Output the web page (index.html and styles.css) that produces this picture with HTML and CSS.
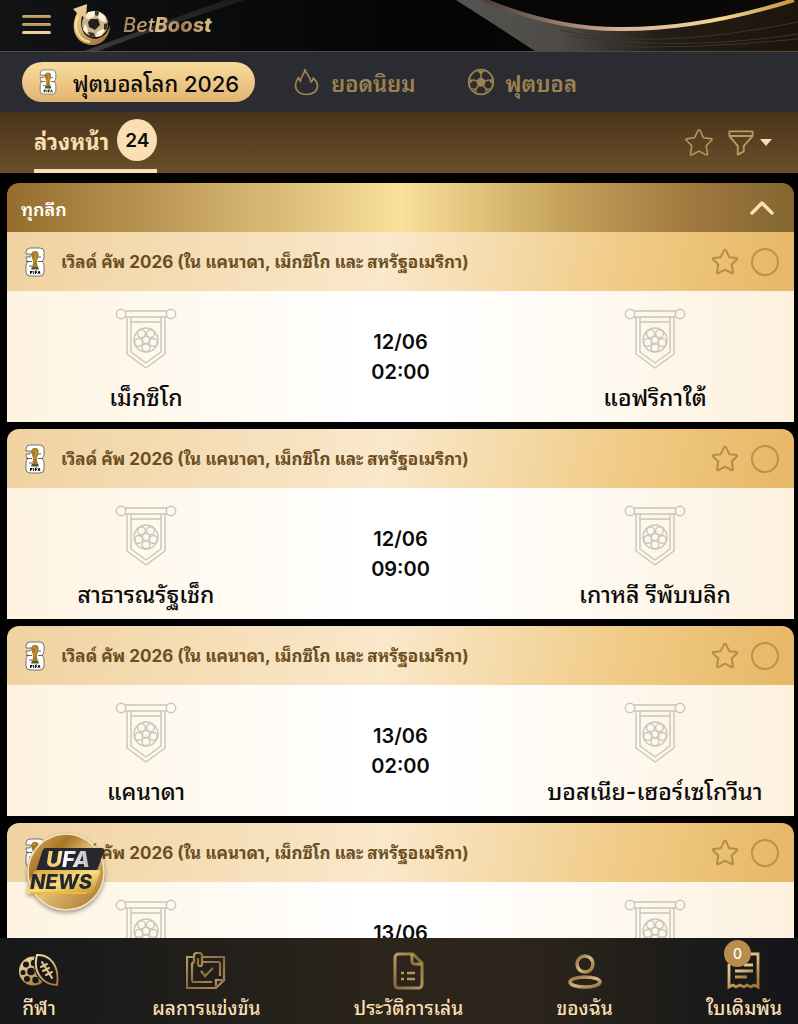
FILE: index.html
```html
<!DOCTYPE html>
<html lang="th">
<head>
    <meta charset="UTF-8">
    <meta name="viewport" content="width=device-width, initial-scale=1.0">
    <title>BetBoost</title>
    <link rel="stylesheet" href="styles.css">
</head>
<body>
    <!-- Icon sprite -->
    <svg class="sprite" aria-hidden="true">
        <defs>
            <linearGradient id="gold" x1="0" y1="0" x2="1" y2="1">
                <stop offset="0" stop-color="#8a6a3a"/>
                <stop offset="0.5" stop-color="#d6b982"/>
                <stop offset="1" stop-color="#8f6c34"/>
            </linearGradient>
            <linearGradient id="gold-light" x1="0" y1="0" x2="0.6" y2="1">
                <stop offset="0" stop-color="#f0d8a6"/>
                <stop offset="0.5" stop-color="#dcb97a"/>
                <stop offset="1" stop-color="#a67a3a"/>
            </linearGradient>
            <linearGradient id="gold-dim" x1="0" y1="0" x2="1" y2="1">
                <stop offset="0" stop-color="#b99b63"/>
                <stop offset="0.5" stop-color="#86693c"/>
                <stop offset="1" stop-color="#b3925a"/>
            </linearGradient>
        </defs>
        <symbol id="icon-cup" viewBox="0 0 20 30">
            <path d="M5 1h10q4 0 4 4v5q0 3-2 4.500 2 1.500 2 4.500v6q0 4-4 4H5q-4 0-4-4v-6q0-3 2-4.500Q1 13 1 10h4l2-3H1V5q0-4 4-4z" fill="#fff" stroke="#555" stroke-width="0.800"/>
            <path d="M1 14.500h6M13 14.500h5M13 10h3M4 19h3" stroke="#555" stroke-width="0.900"/>
            <path d="M10 4c3 0 4 2 3.500 5-.4 3-1.800 4-1.600 7l1.600 6h-7l1.600-6c.2-3-1.200-4-1.600-7C6 6 7 4 10 4z" fill="#a67a28"/>
            <path d="M8 6q4 0 3 4l-2 5" fill="none" stroke="#d0a548" stroke-width="1"/>
            <path d="M6.800 20h6.400l.6 2.500H6.200z" fill="#4a5a2c"/>
            <path d="M5.500 24v3M5.500 24.500h2M5.500 25.700h1.700M8.700 24v3M10.500 27v-3h1.700M10.500 25.500h1.500M13 27l1-3 1 3" stroke="#111" stroke-width="1" fill="none"/>
        </symbol>
        <symbol id="icon-star" viewBox="0 0 30 30">
            <path d="M15 2q.8 0 1.200.8l3.300 7 7.700 1q1.400.3.500 1.500l-5.500 5.400 1.300 8.200q.1 1.500-1.400 1L15 23.100l-7.100 3.800q-1.500.5-1.400-1l1.300-8.200-5.500-5.400q-.9-1.200.5-1.500l7.700-1 3.300-7q.4-.8 1.200-.8z" fill="none" stroke="currentColor" stroke-linejoin="round"/>
        </symbol>
        <symbol id="icon-pennant" viewBox="0 0 62 62">
            <g fill="none" stroke="currentColor" stroke-width="1.400">
                <circle cx="6" cy="6" r="4.700"/>
                <circle cx="56" cy="6" r="4.700"/>
                <path d="M10 3h42M10 9h42M12 9v37l19 14 19-14V9M16 9v35l15 11 15-11V9M16 14h30"/>
                <circle cx="31" cy="32" r="12"/>
                <circle cx="31" cy="32" r="3.600"/>
                <circle cx="26.500" cy="25.800" r="3.900"/>
                <circle cx="35.500" cy="25.800" r="3.900"/>
                <circle cx="23.700" cy="34.400" r="3.900"/>
                <circle cx="38.300" cy="34.400" r="3.900"/>
                <circle cx="31" cy="39.700" r="3.900"/>
            </g>
        </symbol>
        <symbol id="icon-ball" viewBox="0 0 28 28">
            <circle cx="14" cy="14" r="12.300" fill="none" stroke="currentColor" stroke-width="1.800"/>
            <path d="M14 9l5 3.700-1.900 5.800h-6.200L9 12.700zM9.500 2.800h9L14 6.200zM25.500 10.500v6l-3.700-3.900zM2.500 10.500v6l3.700-3.900zM18 24.500l5.500-4.500-4.500.8zM10 24.500L4.500 20l4.500.8z" fill="currentColor"/>
            <path d="M14 9V5M19 12.700l3.500-1M9 12.700l-3.500-1M17.100 18.500l2.200 3M10.900 18.500l-2.200 3" stroke="currentColor" stroke-width="1.500"/>
        </symbol>
    </svg>

    <div class="app">
        <header class="header">
            <svg class="header-waves" viewBox="0 0 798 51" preserveAspectRatio="xMaxYMid slice" aria-hidden="true">
                <defs>
                    <linearGradient id="wave" x1="0" y1="0" x2="1" y2="0">
                        <stop offset="0" stop-color="#4c3d38"/>
                        <stop offset="0.45" stop-color="#d8b49b"/>
                        <stop offset="0.75" stop-color="#f3d693"/>
                        <stop offset="1" stop-color="#c8963c"/>
                    </linearGradient>
                    <linearGradient id="band" x1="0" y1="0" x2="1" y2="0">
                        <stop offset="0" stop-color="#555452"/>
                        <stop offset="0.3" stop-color="#4e4b47"/>
                        <stop offset="0.6" stop-color="#231d17"/>
                        <stop offset="1" stop-color="#1d150c"/>
                    </linearGradient>
                    <linearGradient id="streak" x1="1" y1="0" x2="0" y2="1">
                        <stop offset="0" stop-color="#1a1b1c"/>
                        <stop offset="0.5" stop-color="#2a2b2c"/>
                        <stop offset="1" stop-color="#3c3d3e"/>
                    </linearGradient>
                </defs>
                <path d="M225 0L84 51h14Q170 24 245 0z" fill="url(#streak)"/>
                <path d="M456 0h28q70 29 134 29 80 2 180-29v51H535Q500 28 456 0z" fill="url(#band)"/>
                <path d="M560 30q90 22 238-8M570 36q110 16 228-2M600 46q90 4 198-7" fill="none" stroke="#3c352c" stroke-width="1"/>
                <path d="M484 0q70 29 134 29 80 1 176-29" fill="none" stroke="url(#wave)" stroke-width="4"/>
            </svg>
            <button class="menu-btn" aria-label="เมนู">
                <span></span><span></span><span></span>
            </button>
            <a class="logo" href="#">
                <svg class="logo-mark" viewBox="0 0 38 42" aria-hidden="true">
                    <circle cx="22" cy="20" r="13" fill="#c9b48e"/>
                    <path d="M18 15l7 0 2 6-5 5-6-3-1-5z" fill="#241f1a"/>
                    <path d="M15 8l7-1-1 6-6 2-3-2zM26 8l6 4 1 6-5-1-3-4zM12 20l3 6-1 4-4-4zM24 28l6-3 2 1-4 6-5 1z" fill="#fff2d8"/>
                    <path d="M31 20l4-1-1 6-3 1zM15 28l6 1 1 4-5-1zM22 7l4 1-1 4-3-1z" fill="#3a3027"/>
                    <path d="M14 0L0 5l4 4C-2 20-1 38 17 41c12 1 20-8 20-20-2 9-10 16-19 13C8 31 7 20 9 12l4 3z" fill="url(#gold-light)"/>
                    <path d="M5 12C0 24 5 36 17 38" fill="none" stroke="#f8df9a" stroke-width="2"/>
                </svg>
                <span class="logo-text"><span class="logo-thin">Bet</span>Boost</span>
            </a>
        </header>

        <nav class="sports">
            <button class="sport active">
                <svg class="cup-icon" aria-hidden="true"><use href="#icon-cup"/></svg>
                ฟุตบอลโลก 2026
            </button>
            <button class="sport">
                <svg class="sport-icon" viewBox="0 0 28 28" aria-hidden="true">
                    <path d="M12 1.500c1 5 5.500 6.500 6 12.500 1.500-.8 2-2 2-4 3 2.500 4.500 5 4.500 8C24.500 23.500 19.500 26.500 13.500 26.500S2.500 23 2.500 17.500c0-4 1.500-6 3-8 .5 2 .8 3 2 4C7.500 8.500 11.500 6 12 1.500z" fill="none" stroke="currentColor" stroke-width="1.700" stroke-linejoin="round"/>
                </svg>
                ยอดนิยม
            </button>
            <button class="sport">
                <svg class="sport-icon" aria-hidden="true"><use href="#icon-ball"/></svg>
                ฟุตบอล
            </button>
        </nav>

        <div class="subbar">
            <button class="period">ล่วงหน้า <span class="count">24</span></button>
            <div class="subbar-actions">
                <button class="icon-btn" aria-label="รายการโปรด">
                    <svg class="star-lg" aria-hidden="true"><use href="#icon-star"/></svg>
                </button>
                <button class="icon-btn filter-btn" aria-label="ตัวกรอง">
                    <svg class="filter-icon" viewBox="0 0 28 28" aria-hidden="true">
                        <path d="M1.500 1.500h25v5L17 17v6l-6.500 3.500V17L1.500 6.500zM1.500 6.500h25" fill="none" stroke="currentColor" stroke-width="2" stroke-linejoin="round"/>
                    </svg>
                    <svg class="caret-icon" viewBox="0 0 12 7" aria-hidden="true"><path d="M0 0h12L6 7z" fill="#f9dfb1"/></svg>
                </button>
            </div>
        </div>

        <main class="matches">
            <button class="all-leagues">
                ทุกลีก
                <svg class="chevron" viewBox="0 0 24 16" aria-hidden="true"><path d="M2 13L12 3l10 10" fill="none" stroke="#f9e2ae" stroke-width="3.500" stroke-linecap="round" stroke-linejoin="round"/></svg>
            </button>

            <section class="card first">
                <div class="league">
                    <svg class="cup-icon" aria-hidden="true"><use href="#icon-cup"/></svg>
                    <h2>เวิลด์ คัพ 2026 (ใน แคนาดา, เม็กซิโก และ สหรัฐอเมริกา)</h2>
                    <button class="icon-btn" aria-label="รายการโปรด"><svg class="star" aria-hidden="true"><use href="#icon-star"/></svg></button>
                    <input type="checkbox" class="pick" aria-label="เลือกลีก">
                </div>
                <div class="match">
                    <div class="team"><svg class="pennant" aria-hidden="true"><use href="#icon-pennant"/></svg><span>เม็กซิโก</span></div>
                    <div class="time"><span>12/06</span><span>02:00</span></div>
                    <div class="team"><svg class="pennant" aria-hidden="true"><use href="#icon-pennant"/></svg><span>แอฟริกาใต้</span></div>
                </div>
            </section>

            <section class="card">
                <div class="league">
                    <svg class="cup-icon" aria-hidden="true"><use href="#icon-cup"/></svg>
                    <h2>เวิลด์ คัพ 2026 (ใน แคนาดา, เม็กซิโก และ สหรัฐอเมริกา)</h2>
                    <button class="icon-btn" aria-label="รายการโปรด"><svg class="star" aria-hidden="true"><use href="#icon-star"/></svg></button>
                    <input type="checkbox" class="pick" aria-label="เลือกลีก">
                </div>
                <div class="match">
                    <div class="team"><svg class="pennant" aria-hidden="true"><use href="#icon-pennant"/></svg><span>สาธารณรัฐเช็ก</span></div>
                    <div class="time"><span>12/06</span><span>09:00</span></div>
                    <div class="team"><svg class="pennant" aria-hidden="true"><use href="#icon-pennant"/></svg><span>เกาหลี รีพับบลิก</span></div>
                </div>
            </section>

            <section class="card">
                <div class="league">
                    <svg class="cup-icon" aria-hidden="true"><use href="#icon-cup"/></svg>
                    <h2>เวิลด์ คัพ 2026 (ใน แคนาดา, เม็กซิโก และ สหรัฐอเมริกา)</h2>
                    <button class="icon-btn" aria-label="รายการโปรด"><svg class="star" aria-hidden="true"><use href="#icon-star"/></svg></button>
                    <input type="checkbox" class="pick" aria-label="เลือกลีก">
                </div>
                <div class="match">
                    <div class="team"><svg class="pennant" aria-hidden="true"><use href="#icon-pennant"/></svg><span>แคนาดา</span></div>
                    <div class="time"><span>13/06</span><span>02:00</span></div>
                    <div class="team"><svg class="pennant" aria-hidden="true"><use href="#icon-pennant"/></svg><span>บอสเนีย-เฮอร์เซโกวีนา</span></div>
                </div>
            </section>

            <section class="card">
                <div class="league">
                    <svg class="cup-icon" aria-hidden="true"><use href="#icon-cup"/></svg>
                    <h2>เวิลด์ คัพ 2026 (ใน แคนาดา, เม็กซิโก และ สหรัฐอเมริกา)</h2>
                    <button class="icon-btn" aria-label="รายการโปรด"><svg class="star" aria-hidden="true"><use href="#icon-star"/></svg></button>
                    <input type="checkbox" class="pick" aria-label="เลือกลีก">
                </div>
                <div class="match">
                    <div class="team"><svg class="pennant" aria-hidden="true"><use href="#icon-pennant"/></svg></div>
                    <div class="time"><span>13/06</span></div>
                    <div class="team"><svg class="pennant" aria-hidden="true"><use href="#icon-pennant"/></svg></div>
                </div>
            </section>
        </main>

        <!-- Floating news button -->
        <a class="news" href="#" aria-label="UFA NEWS">
            <svg viewBox="0 0 80 80" aria-hidden="true">
                <defs>
                    <linearGradient id="coin" x1="0" y1="0" x2="1" y2="1">
                        <stop offset="0" stop-color="#d9ad60"/>
                        <stop offset="0.3" stop-color="#a87628"/>
                        <stop offset="0.5" stop-color="#e3bd74"/>
                        <stop offset="1" stop-color="#a26f22"/>
                    </linearGradient>
                    <linearGradient id="plate" x1="0" y1="0" x2="1" y2="1">
                        <stop offset="0" stop-color="#d2a13c"/>
                        <stop offset="0.5" stop-color="#f7dc80"/>
                        <stop offset="1" stop-color="#c08d28"/>
                    </linearGradient>
                    <linearGradient id="ufa" x1="0" y1="0" x2="1" y2="0">
                        <stop offset="0.25" stop-color="#f2cf70"/>
                        <stop offset="0.4" stop-color="#ffffff"/>
                        <stop offset="1" stop-color="#b9bcc0"/>
                    </linearGradient>
                </defs>
                <circle cx="40" cy="40" r="38" fill="url(#coin)" stroke="#f3e3bf" stroke-width="1.500"/>
                <path d="M20 16h55q4 0 3 3l-6 17q-1 3-5 3H10l6-19q1-4 4-4z" fill="#26282c"/>
                <path d="M12 38h59q4 0 3 3l-5 14q-2 6-7 7H4q-4 0-3-4l6-16q1-4 5-4z" fill="url(#plate)"/>
                <path d="M4 61h56" stroke="#f1b92e" stroke-width="2"/>
                <text class="news-top" x="20" y="35" fill="url(#ufa)">UFA</text>
                <text class="news-bottom" x="4" y="57" fill="#26282c">NEWS</text>
            </svg>
        </a>

        <nav class="bottom-nav">
            <a href="#" class="nav-item">
                <svg class="nav-icon" viewBox="0 0 40 38" aria-hidden="true">
                    <circle cx="14.500" cy="19" r="14.500" fill="url(#gold-light)"/>
                    <g fill="#17181a">
                        <circle cx="12" cy="19.500" r="3.800"/>
                        <circle cx="7" cy="12.500" r="3"/>
                        <circle cx="15" cy="11" r="3.200"/>
                        <circle cx="4" cy="20.500" r="2.500"/>
                        <circle cx="8" cy="27" r="3"/>
                        <circle cx="16.500" cy="28" r="3.200"/>
                        <circle cx="20" cy="21" r="3"/>
                    </g>
                    <path d="M18 3C30 2 41 13 38 33 25 33 13 21 18 3z" fill="#17181a" stroke="#17181a" stroke-width="4"/>
                    <path d="M18 3C30 2 41 13 38 33 25 33 13 21 18 3z" fill="none" stroke="url(#gold-light)" stroke-width="2"/>
                    <path d="M23 10l10 16M22 15l6-3M24 19l6-3M27 23l6-3" fill="none" stroke="#e3c38a" stroke-width="2" stroke-linecap="round"/>
                </svg>
                กีฬา
            </a>
            <a href="#" class="nav-item">
                <svg class="nav-icon" viewBox="0 0 40 38" aria-hidden="true">
                    <g fill="none" stroke="url(#gold-dim)" stroke-width="2.200">
                        <path d="M7 5H1v31h29l8-8V5H17"/>
                        <path d="M30 36v-8h8"/>
                        <path d="M6 11v17q0 2 2 2h18M17 10h15q2 0 2 2v12M9 10q-3 0-3 3"/>
                        <path d="M8 11V4q0-3 3-3h2q3 0 3 3v8q0 2-2 2t-2-2V6"/>
                        <path d="M15 19l4 5 8-8"/>
                    </g>
                </svg>
                ผลการแข่งขัน
            </a>
            <a href="#" class="nav-item">
                <svg class="nav-icon" viewBox="0 0 40 38" aria-hidden="true">
                    <g fill="none" stroke="url(#gold-dim)" stroke-width="3" stroke-linejoin="round">
                        <path d="M10 2h14l9 9v21q0 4-4 4H10q-4 0-4-4V6q0-4 4-4z"/>
                        <path d="M23 2v7q0 3 3 3h7"/>
                    </g>
                    <path d="M12 21h3M12 27h3M18 21h8M18 27h8" stroke="#b3925a" stroke-width="2.500"/>
                </svg>
                ประวัติการเล่น
            </a>
            <a href="#" class="nav-item">
                <svg class="nav-icon" viewBox="0 0 40 38" aria-hidden="true">
                    <g fill="none" stroke="url(#gold)" stroke-width="3.500">
                        <circle cx="20" cy="12" r="8"/>
                        <ellipse cx="20" cy="30" rx="15" ry="5"/>
                    </g>
                </svg>
                ของฉัน
            </a>
            <a href="#" class="nav-item">
                <svg class="nav-icon" viewBox="0 0 40 38" aria-hidden="true">
                    <g fill="none" stroke="url(#gold-light)" stroke-width="2.800">
                        <path d="M27 2h7v33l-4-2-3 2-4-2-3 2-4-2-4 2-3-2-4 2V12"/>
                        <path d="M11 19h18M11 25h12M20 13h9"/>
                    </g>
                </svg>
                ใบเดิมพัน
                <span class="slip-count">0</span>
            </a>
        </nav>
    </div>
</body>
</html>
```
FILE: styles.css
```css
:root {
    --cream: #f9dfb1;
    --gold: #9d8350;
    --brown: #6b4e22;
    --dark: #2b2c32;
}

* {
    margin: 0;
    padding: 0;
    box-sizing: border-box;
    font-family: Inter, Thonburi, 'Noto Sans Thai Looped', Loma, Garuda, 'Noto Sans Thai', sans-serif;
}

body {
    background: #000;
    color: #0b0b0b;
}

button {
    background: none;
    border: none;
    cursor: pointer;
    color: inherit;
}

a {
    color: inherit;
    text-decoration: none;
}

svg {
    display: block;
    flex-shrink: 0;
}

.sprite {
    position: absolute;
    width: 0;
    height: 0;
}

.app {
    position: relative;
    height: 100vh;
    display: flex;
    flex-direction: column;
}

/* Header */
.header {
    position: relative;
    display: flex;
    align-items: center;
    gap: 22px;
    height: 52px;
    padding: 0 22px 2px;
    background: linear-gradient(90deg, #111314, #050505 50%, #0b0907);
    border-bottom: 1px solid #4b4c48;
    flex-shrink: 0;
}

.header-waves {
    position: absolute;
    top: 0;
    left: 0;
    width: 100%;
    height: 100%;
}

.menu-btn {
    position: relative;
    display: flex;
    flex-direction: column;
    gap: 5px;
    width: 29px;
}

.menu-btn span {
    height: 3px;
    border-radius: 2px;
    background: linear-gradient(180deg, #d0b078, #a98852);
}

.menu-btn span:last-child {
    background: #ecd19c;
}

.logo {
    position: relative;
    display: flex;
    align-items: center;
    gap: 12px;
}

.logo-mark {
    width: 38px;
    height: 42px;
}

.logo-text {
    font-size: 20px;
    font-style: italic;
    font-weight: 800;
    background: linear-gradient(90deg, #a5835a, #dcbd8b 40%, #a07c4c 65%, #e0c08c);
    background-clip: text;
    -webkit-background-clip: text;
    color: transparent;
}

.logo-thin {
    font-weight: 500;
}

/* Sports */
.sports {
    display: flex;
    align-items: center;
    gap: 38px;
    height: 60px;
    padding: 0 22px;
    background: var(--dark);
    flex-shrink: 0;
}

.sport {
    display: flex;
    align-items: center;
    gap: 10px;
    height: 40px;
    padding-right: 14px;
    font-size: 22px;
    font-weight: 600;
    color: var(--gold);
    white-space: nowrap;
}

.sport.active {
    padding: 0 16px 0 17px;
    gap: 16px;
    border-radius: 20px;
    color: #0b0b0b;
    font-weight: 500;
    background: linear-gradient(180deg, #f9dd9d, #e2b372);
}

.sport-icon {
    width: 28px;
    height: 28px;
}

.cup-icon {
    width: 20px;
    height: 30px;
}

.sport .cup-icon {
    width: 18px;
    height: 26px;
}

/* Sub bar */
.subbar {
    display: flex;
    align-items: center;
    justify-content: space-between;
    height: 61px;
    padding: 0 26px 0 34px;
    background: linear-gradient(180deg, #4a341a, #6b4f2a);
    flex-shrink: 0;
}

.period {
    display: flex;
    align-items: center;
    gap: 8px;
    height: 61px;
    padding-bottom: 1px;
    border-bottom: 4px solid var(--cream);
    color: var(--cream);
    font-size: 22px;
    font-weight: 700;
}

.count {
    display: flex;
    align-items: center;
    justify-content: center;
    width: 40px;
    height: 42px;
    border-radius: 50%;
    background: var(--cream);
    color: #0b0b0b;
    font-size: 19px;
    font-weight: 600;
}

.subbar-actions {
    display: flex;
    align-items: center;
    gap: 14px;
    color: #b99b61;
}

.star-lg {
    width: 30px;
    height: 30px;
    stroke-width: 1.5px;
}

.filter-btn {
    display: flex;
    align-items: center;
    gap: 6px;
}

.filter-icon {
    width: 26px;
    height: 26px;
}

.caret-icon {
    width: 12px;
    height: 7px;
}

/* Matches */
.matches {
    flex: 1;
    min-height: 0;
    overflow: hidden;
    padding: 10px 4px 0 7px;
}

.all-leagues {
    display: flex;
    align-items: center;
    justify-content: space-between;
    width: 100%;
    height: 49px;
    padding: 0 20px 0 14px;
    border-radius: 12px 12px 0 0;
    background: linear-gradient(90deg, #956c2b, #fae099 50%, #c6a45c 70%, #a07840 87%, #83662f);
    color: #fff;
    font-size: 18px;
    font-weight: 600;
}

.chevron {
    width: 24px;
    height: 16px;
}

.card {
    margin-bottom: 7px;
    border-radius: 12px 12px 0 0;
    overflow: hidden;
}

.card.first {
    border-radius: 0;
}

.league {
    display: flex;
    align-items: center;
    height: 59px;
    padding: 0 15px 0 18px;
    background: linear-gradient(100deg, #f0d2a0, #fae8cb 48%, #f0c982 80%, #e6b766);
}

.league h2 {
    flex: 1;
    margin-left: 16px;
    padding-bottom: 2px;
    font-size: 17px;
    font-weight: 700;
    color: var(--brown);
    white-space: nowrap;
}

.league .icon-btn {
    color: #b58c48;
}

.star {
    width: 28px;
    height: 28px;
    stroke-width: 2.2px;
}

.pick {
    appearance: none;
    width: 28px;
    height: 28px;
    margin-left: 12px;
    border: 2px solid #bd9149;
    border-radius: 50%;
}

.match {
    display: flex;
    justify-content: space-between;
    height: 131px;
    background: linear-gradient(90deg, #fef3e0, #fff 45%, #fff 55%, #fdf1de);
}

.team {
    display: flex;
    flex-direction: column;
    align-items: center;
    gap: 10px;
    width: 278px;
    padding-top: 17px;
    font-size: 23px;
    line-height: 36px;
    font-weight: 500;
    white-space: nowrap;
}

.pennant {
    width: 62px;
    height: 62px;
    color: #c9c5bb;
}

.time {
    display: flex;
    flex-direction: column;
    padding-top: 36px;
    font-size: 20px;
    line-height: 30px;
    font-weight: 600;
    text-align: center;
}

/* News button */
.news {
    position: absolute;
    left: 26px;
    bottom: 112px;
    width: 80px;
    height: 80px;
    filter: drop-shadow(0 2px 2px rgba(0, 0, 0, 0.4));
}

.news-top {
    font-size: 22px;
    font-weight: 800;
    font-style: italic;
}

.news-bottom {
    font-size: 20px;
    font-weight: 800;
    font-style: italic;
}

/* Bottom nav */
.bottom-nav {
    display: flex;
    justify-content: space-between;
    height: 86px;
    padding: 14px 16px 0 19px;
    background: linear-gradient(90deg, #17181a, #2c251b 50%, #2c251b 65%, #131519);
    color: var(--cream);
    flex-shrink: 0;
}

.nav-item {
    position: relative;
    display: flex;
    flex-direction: column;
    align-items: center;
    gap: 5px;
    font-size: 19px;
    line-height: 28px;
    font-weight: 500;
    white-space: nowrap;
}

.nav-icon {
    width: 40px;
    height: 38px;
}

.slip-count {
    position: absolute;
    top: -12px;
    left: 18px;
    width: 27px;
    height: 27px;
    border-radius: 50%;
    background: #b98d4f;
    color: #fff;
    font-size: 14px;
    line-height: 27px;
    text-align: center;
}
```
